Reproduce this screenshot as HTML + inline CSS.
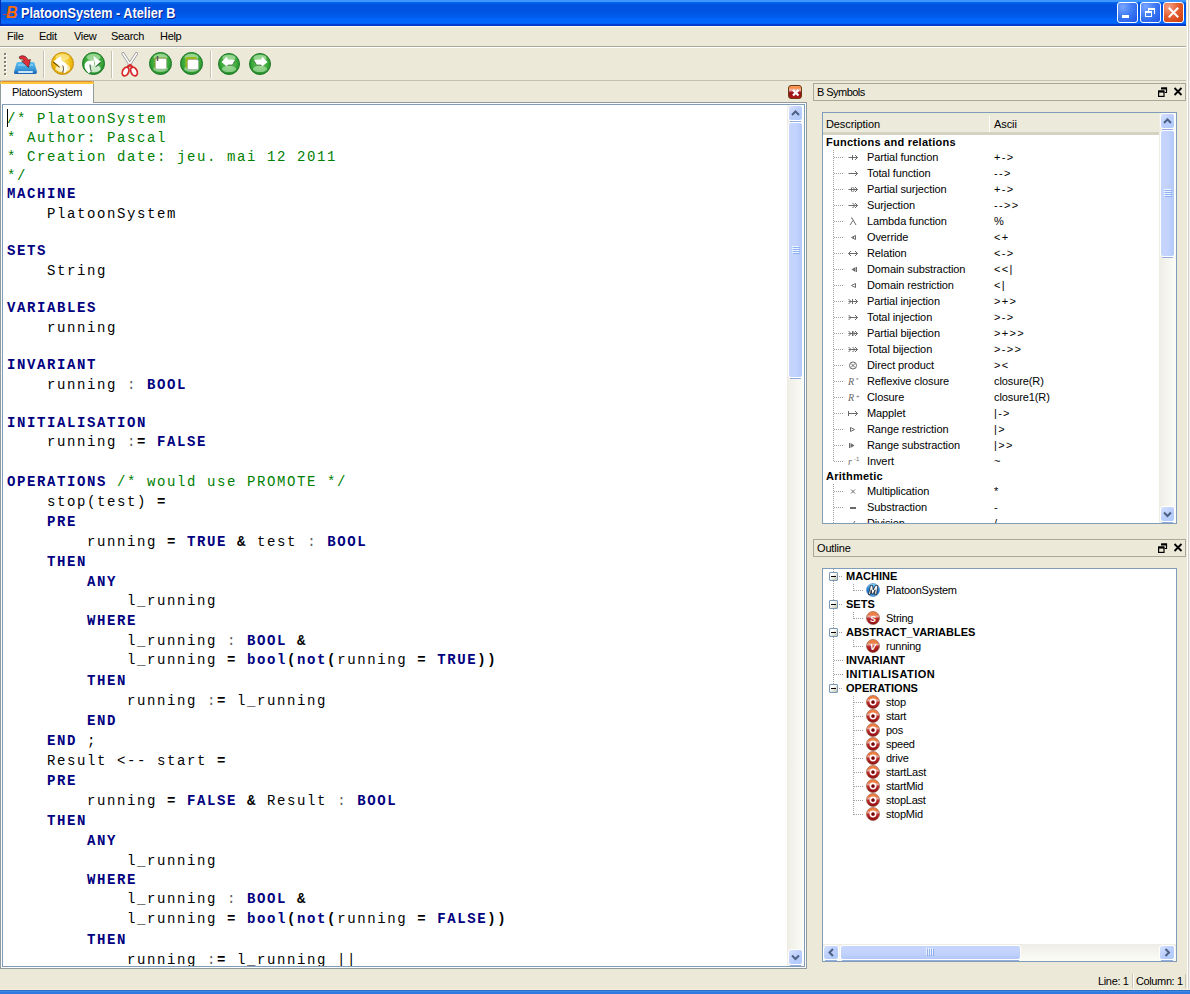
<!DOCTYPE html>
<html><head><meta charset="utf-8">
<style>
*{margin:0;padding:0;box-sizing:border-box}
html,body{width:1190px;height:994px;overflow:hidden;background:#ece9d8;font-family:"Liberation Sans",sans-serif;font-size:11px;color:#000;position:relative}
.a{position:absolute}
svg.a{display:block;overflow:visible}
#title{left:0;top:0;width:1186px;height:26px;background:linear-gradient(to bottom,#3d95ff 0,#3f96ff 2px,#0a6cf5 2px,#005fea 3px,#0057e2 4px,#0053e0 5px,#0053e0 11px,#0056e6 13px,#005cee 17px,#0066fa 19px,#0068fe 23px,#0058e8 24px,#0044d2 24px,#0032c5 26px)}
#title .t{left:21px;top:5px;color:#fff;font-weight:bold;font-size:14px;letter-spacing:0;text-shadow:1px 1px 0 #0a1f8f;white-space:pre;transform:scaleX(0.905);transform-origin:0 0}
.wb{top:2px;width:21px;height:21px;border:1px solid #fff;border-radius:3px;background:radial-gradient(circle at 25% 20%,#7aa6ff 0,#3f7cf5 45%,#1c55e6 100%)}
#menu{left:0;top:26px;width:1186px;height:21px;border-top:1px solid #fffbee;border-bottom:1px solid #aca899}
#menu span{position:absolute;top:3px;letter-spacing:-0.3px}
#tbar{left:0;top:47px;width:1186px;height:34px;border-top:1px solid #fff;border-bottom:1px solid #c5c2b2}
.sep{width:1px;background:#c5c2b2;border-right:1px solid #fff}
.code{font-family:"Liberation Mono",monospace;font-size:14px;letter-spacing:1.6px;white-space:pre;position:absolute;left:4px;line-height:20px;height:20px}
.k{color:#000080;font-weight:bold}
.c{color:#008000}
.o{color:#606060}
.sb{background:linear-gradient(to right,#eeede5,#fcfcf8)}
.sb2{background:linear-gradient(to bottom,#eeede5,#fcfcf8)}
.thumb{border:1px solid #fff;border-radius:3px;background:linear-gradient(to right,#c6d5fc,#c3d3fd 50%,#b2c9f9)}
.thumb2{border:1px solid #fff;border-radius:3px;background:linear-gradient(to bottom,#c6d5fc,#c3d3fd 50%,#b2c9f9)}
.btn{border:1px solid #fff;border-radius:3px;background:linear-gradient(135deg,#d6e2fe,#bccefd 50%,#aecafa)}
.dock{border:1px solid #aca899;background:#ece9d8}
.frame{border:1px solid #7f9db9;background:#fff}
.hdr{background:#ebeadb;border-bottom:3px solid #d6d2c2}
.ts{white-space:pre;letter-spacing:-0.1px}
.tb{white-space:pre;font-weight:bold}
.dh{height:1px;background:repeating-linear-gradient(to right,#a0a0a0 0,#a0a0a0 1px,transparent 1px,transparent 2px)}
.dv{width:1px;background:repeating-linear-gradient(to bottom,#a0a0a0 0,#a0a0a0 1px,transparent 1px,transparent 2px)}
.ebox{width:9px;height:9px;border:1px solid #7898b5;border-radius:1px;background:linear-gradient(135deg,#fff 30%,#c4c2b0)}
.ebox:after{content:"";position:absolute;left:1px;top:3px;width:5px;height:1px;background:#000}
</style></head><body>
<div id="title" class="a">
  <div class="a" style="left:0;top:0;width:1px;height:26px;background:#0030b0"></div>
  <div class="a" style="left:1px;top:4px;width:17px;height:16px;background:#0a5ad8;opacity:0.5"></div>
  <div class="a" style="left:6px;top:5px;font-size:16px;line-height:16px;font-weight:bold;font-style:italic;color:#ff6a08;font-family:'Liberation Sans',sans-serif;">B</div>
  <div class="a" style="left:3px;top:14px;width:9px;height:1px;background:#d04040;opacity:0.8"></div>
  <div class="a t">PlatoonSystem - Atelier B</div>
  <div class="a wb" style="left:1117px"><div class="a" style="left:4px;top:12px;width:7px;height:3px;background:#fff"></div></div>
  <div class="a wb" style="left:1140px"><div class="a" style="left:4px;top:8px;width:7px;height:6px;border:1px solid #fff;border-top-width:2px"></div><div class="a" style="left:7px;top:5px;width:7px;height:6px;border:1px solid #fff;border-top-width:2px;border-left:none;border-bottom:none"></div><div class="a" style="left:7px;top:5px;width:1px;height:3px;background:#fff"></div></div>
  <div class="a wb" style="left:1163px;background:radial-gradient(circle at 25% 20%,#f3a08a 0,#e6602f 45%,#c83a0a 100%)"><svg class="a" style="left:4px;top:4px" width="11" height="11"><path d="M0.8 0.8L10.2 10.2M10.2 0.8L0.8 10.2" stroke="#fff" stroke-width="2"/></svg></div>
</div>
<div class="a" style="left:1186px;top:0;width:4px;height:990px;background:linear-gradient(to right,#ece9d8 0,#ece9d8 1px,#fff 1px,#fff 2px,#d4d0c8 2px,#d4d0c8 3px,#f2f2f2 3px)"></div>
<div id="menu" class="a">
  <span style="left:7px">File</span><span style="left:39px">Edit</span><span style="left:74px">View</span><span style="left:111px">Search</span><span style="left:160px">Help</span>
</div>
<div id="tbar" class="a"></div>
<div class="a" style="left:4px;top:53px;width:2px;height:2px;background:#7a7868;border-radius:0.5px;box-shadow:1px 1px 0 #fff"></div>
<div class="a" style="left:4px;top:57px;width:2px;height:2px;background:#7a7868;border-radius:0.5px;box-shadow:1px 1px 0 #fff"></div>
<div class="a" style="left:4px;top:61px;width:2px;height:2px;background:#7a7868;border-radius:0.5px;box-shadow:1px 1px 0 #fff"></div>
<div class="a" style="left:4px;top:65px;width:2px;height:2px;background:#7a7868;border-radius:0.5px;box-shadow:1px 1px 0 #fff"></div>
<div class="a" style="left:4px;top:69px;width:2px;height:2px;background:#7a7868;border-radius:0.5px;box-shadow:1px 1px 0 #fff"></div>
<div class="a" style="left:4px;top:73px;width:2px;height:2px;background:#7a7868;border-radius:0.5px;box-shadow:1px 1px 0 #fff"></div>
<div class="a sep" style="left:43px;top:51px;height:27px;width:2px"></div>
<div class="a sep" style="left:111px;top:51px;height:27px;width:2px"></div>
<div class="a sep" style="left:210px;top:51px;height:27px;width:2px"></div>
<svg class="a" style="left:13px;top:53px" width="25" height="22" viewBox="0 0 25 22">
<defs><linearGradient id="tray" x1="0" y1="0" x2="0" y2="1"><stop offset="0" stop-color="#5cc0f0"/><stop offset="0.6" stop-color="#3a9ad8"/><stop offset="1" stop-color="#1a5fb0"/></linearGradient></defs>
<path d="M5 9H20Q21 9 21.5 10L24 19Q24 21 22 21H3Q0.5 21 1 19L3.5 10Q4 9 5 9Z" fill="url(#tray)"/>
<path d="M5 12H20" stroke="#a8dcf6" stroke-width="1.5" opacity="0.7"/>
<path d="M6 19H19" stroke="#c8e8fa" stroke-width="2" stroke-linecap="round"/>
<path d="M6 4Q9 1.5 12.5 3.5Q14.5 5 15 7L17.5 6.5L15.5 14.5L8.5 8L11.5 7.5Q10 5.5 7 6Z" fill="#e2303a" stroke="#2a1010" stroke-width="0.5"/>
</svg>
<svg class="a" style="left:51px;top:52px" width="23" height="23" viewBox="0 0 23 23"><defs><radialGradient id="tb51" cx="0.5" cy="0.45" r="0.55"><stop offset="0" stop-color="#f8e27a"/><stop offset="0.7" stop-color="#f0bd10"/><stop offset="1" stop-color="#d99a05"/></radialGradient></defs><circle cx="11.5" cy="11.5" r="11" fill="url(#tb51)" stroke="#c8961a" stroke-width="1"/><ellipse cx="11.5" cy="5.175" rx="6.9" ry="3.45" fill="#fff3b0" opacity="0.55"/><ellipse cx="11.5" cy="16.675" rx="7.475" ry="3.22" fill="#fff3b0" opacity="0.5"/><ellipse cx="12" cy="16" rx="7" ry="4.5" fill="#fff" opacity="0.55"/><path d="M5 8.5L13 13Q15 15 12 20" stroke="#fff" stroke-width="5" fill="none"/><path d="M2.3 9.5L10 4.3L11 13Z" fill="#fff"/><path d="M2.3 10L8.6 15.3M11.5 13.5Q13.5 16 11.5 20.5" stroke="#3a2a00" stroke-width="1.1" fill="none" opacity="0.75"/></svg>
<svg class="a" style="left:82px;top:52px" width="23" height="23" viewBox="0 0 23 23"><defs><radialGradient id="tb82" cx="0.5" cy="0.45" r="0.55"><stop offset="0" stop-color="#7cc46a"/><stop offset="0.7" stop-color="#3aa83a"/><stop offset="1" stop-color="#22882a"/></radialGradient></defs><circle cx="11.5" cy="11.5" r="11" fill="url(#tb82)" stroke="#1f7a28" stroke-width="1"/><ellipse cx="11.5" cy="5.175" rx="6.9" ry="3.45" fill="#d8f5d0" opacity="0.55"/><ellipse cx="11.5" cy="16.675" rx="7.475" ry="3.22" fill="#d8f5d0" opacity="0.5"/><ellipse cx="12" cy="16.5" rx="6.5" ry="4" fill="#fff" opacity="0.55"/><path d="M12 11H9Q4.5 11 5 14.5Q5.5 17 8.5 19.5" stroke="#fff" stroke-width="5" fill="none"/><path d="M11.4 4L19 9.8L13.6 14.8Z" fill="#fff"/><path d="M18.6 10.3L13.6 14.8M8 12.5Q8 16 9.3 19.5" stroke="#0a3a0a" stroke-width="1.1" fill="none" opacity="0.75"/></svg>
<svg class="a" style="left:121px;top:52px" width="18" height="25" viewBox="0 0 18 25">
<path d="M2 1.5L10 14M15.5 1.5L7.5 14" stroke="#888" stroke-width="3" stroke-linecap="round"/>
<path d="M2 1.5L10 14M15.5 1.5L7.5 14" stroke="#fff" stroke-width="1.6" stroke-linecap="round"/>
<ellipse cx="4.6" cy="19.5" rx="3" ry="4.6" transform="rotate(25 4.6 19.5)" fill="#fff" stroke="#d82828" stroke-width="1.8"/>
<ellipse cx="13" cy="19.5" rx="3" ry="4.6" transform="rotate(-25 13 19.5)" fill="#fff" stroke="#d82828" stroke-width="1.8"/>
<path d="M6.5 15L9 13L11.5 15" stroke="#d82828" stroke-width="2.2" fill="none"/>
</svg>
<svg class="a" style="left:149px;top:52px" width="23" height="23" viewBox="0 0 23 23"><defs><radialGradient id="tb149" cx="0.5" cy="0.45" r="0.55"><stop offset="0" stop-color="#7cc46a"/><stop offset="0.7" stop-color="#3aa83a"/><stop offset="1" stop-color="#22882a"/></radialGradient></defs><circle cx="11.5" cy="11.5" r="11" fill="url(#tb149)" stroke="#1f7a28" stroke-width="1"/><ellipse cx="11.5" cy="5.175" rx="6.9" ry="3.45" fill="#d8f5d0" opacity="0.55"/><ellipse cx="11.5" cy="16.675" rx="7.475" ry="3.22" fill="#d8f5d0" opacity="0.5"/><rect x="5.5" y="5.5" width="12" height="11" rx="1.5" fill="#8a9c12"/><rect x="6.5" y="6.5" width="11" height="10.5" rx="1.5" fill="#fff" stroke="#a0a0a0" stroke-width="0.5"/><path d="M8.5 4V9" stroke="#555" stroke-width="1.5"/></svg>
<svg class="a" style="left:180px;top:52px" width="23" height="23" viewBox="0 0 23 23"><defs><radialGradient id="tb180" cx="0.5" cy="0.45" r="0.55"><stop offset="0" stop-color="#7cc46a"/><stop offset="0.7" stop-color="#3aa83a"/><stop offset="1" stop-color="#22882a"/></radialGradient></defs><circle cx="11.5" cy="11.5" r="11" fill="url(#tb180)" stroke="#1f7a28" stroke-width="1"/><ellipse cx="11.5" cy="5.175" rx="6.9" ry="3.45" fill="#d8f5d0" opacity="0.55"/><ellipse cx="11.5" cy="16.675" rx="7.475" ry="3.22" fill="#d8f5d0" opacity="0.5"/><rect x="5.5" y="5" width="11.5" height="11" rx="1.5" fill="#9ab818"/><rect x="7.5" y="7.5" width="11" height="10" rx="1.5" fill="#fff" stroke="#909090" stroke-width="0.5"/></svg>
<svg class="a" style="left:218px;top:53px" width="22" height="22" viewBox="0 0 22 22"><defs><radialGradient id="tb218" cx="0.5" cy="0.45" r="0.55"><stop offset="0" stop-color="#7cc46a"/><stop offset="0.7" stop-color="#3aa83a"/><stop offset="1" stop-color="#22882a"/></radialGradient></defs><circle cx="11" cy="11" r="10.5" fill="url(#tb218)" stroke="#1f7a28" stroke-width="1"/><ellipse cx="11" cy="4.95" rx="6.6" ry="3.3" fill="#d8f5d0" opacity="0.55"/><ellipse cx="11" cy="15.95" rx="7.15" ry="3.08" fill="#d8f5d0" opacity="0.5"/><path d="M3.5 9L9 3.5L9.5 6.5L17 7L14.5 12L10 12L9.5 14Z" fill="#fff"/><path d="M9 13.5L10 12L14.5 12L17 7.5" stroke="#1a4a1a" stroke-width="0.8" fill="none" opacity="0.7"/></svg>
<svg class="a" style="left:249px;top:53px" width="22" height="22" viewBox="0 0 22 22"><defs><radialGradient id="tb249" cx="0.5" cy="0.45" r="0.55"><stop offset="0" stop-color="#7cc46a"/><stop offset="0.7" stop-color="#3aa83a"/><stop offset="1" stop-color="#22882a"/></radialGradient></defs><circle cx="11" cy="11" r="10.5" fill="url(#tb249)" stroke="#1f7a28" stroke-width="1"/><ellipse cx="11" cy="4.95" rx="6.6" ry="3.3" fill="#d8f5d0" opacity="0.55"/><ellipse cx="11" cy="15.95" rx="7.15" ry="3.08" fill="#d8f5d0" opacity="0.5"/><path d="M18.5 9L13 3.5L12.5 6.5L5 7L7.5 12L12 12L12.5 14Z" fill="#fff"/><path d="M13 13.5L12 12L7.5 12L5 7.5" stroke="#1a4a1a" stroke-width="0.8" fill="none" opacity="0.7"/></svg>

<!-- editor tab pane -->
<div class="a" style="left:0px;top:102px;width:807px;height:867px;border:1px solid #919b9c;background:#fcfcfe"></div>
<div class="a" style="left:0px;top:81px;width:94px;height:22px;background:#fcfcfe;border:1px solid #919b9c;border-bottom:none;border-top:none"></div>
<div class="a" style="left:0px;top:81px;width:94px;height:3px;background:linear-gradient(#e68b2c 0,#e68b2c 1px,#ffc83c 1px);border-radius:3px 3px 0 0"></div>
<div class="a" style="left:12px;top:86px;letter-spacing:-0.3px">PlatoonSystem</div>
<div class="a" style="left:788px;top:85px;width:14px;height:14px;border-radius:3px;background:linear-gradient(#f7a070 0,#f88a40 15%,#f0c0c0 35%,#b02030 50%,#901018 65%,#b01818 100%);border:1px solid #6a3a10"><svg class="a" style="left:2px;top:2px" width="9" height="9"><path d="M2 2L7.5 7.5M7.5 2L2 7.5" stroke="#fff" stroke-width="2.3"/></svg></div>
<div class="a frame" style="left:2px;top:104px;width:803px;height:863px"></div>
<div id="code" class="a" style="left:3px;top:105px;width:784px;height:861px;overflow:hidden;background:#fff"><div class="code" style="top:4px"><span class="c">/* PlatoonSystem</span></div>
<div class="code" style="top:23px"><span class="c">* Author: Pascal</span></div>
<div class="code" style="top:42px"><span class="c">* Creation date: jeu. mai 12 2011</span></div>
<div class="code" style="top:61px"><span class="c">*/</span></div>
<div class="code" style="top:79px"><span class="k">MACHINE</span></div>
<div class="code" style="top:99px">    PlatoonSystem</div>
<div class="code" style="top:136px"><span class="k">SETS</span></div>
<div class="code" style="top:156px">    String</div>
<div class="code" style="top:193px"><span class="k">VARIABLES</span></div>
<div class="code" style="top:213px">    running</div>
<div class="code" style="top:250px"><span class="k">INVARIANT</span></div>
<div class="code" style="top:270px">    running <span class="o">:</span> <span class="k">BOOL</span></div>
<div class="code" style="top:308px"><span class="k">INITIALISATION</span></div>
<div class="code" style="top:327px">    running <span class="o">:</span><b>=</b> <span class="k">FALSE</span></div>
<div class="code" style="top:367px"><span class="k">OPERATIONS</span> <span class="c">/* would use PROMOTE */</span></div>
<div class="code" style="top:387px">    stop(test) <b>=</b></div>
<div class="code" style="top:407px">    <span class="k">PRE</span></div>
<div class="code" style="top:427px">        running <b>=</b> <span class="k">TRUE</span> <b>&amp;</b> test <span class="o">:</span> <span class="k">BOOL</span></div>
<div class="code" style="top:447px">    <span class="k">THEN</span></div>
<div class="code" style="top:467px">        <span class="k">ANY</span></div>
<div class="code" style="top:486px">            l_running</div>
<div class="code" style="top:506px">        <span class="k">WHERE</span></div>
<div class="code" style="top:526px">            l_running <span class="o">:</span> <span class="k">BOOL</span> <b>&amp;</b></div>
<div class="code" style="top:545px">            l_running <b>=</b> <span class="k">bool</span><b>(</b><span class="k">not</span><b>(</b>running <b>=</b> <span class="k">TRUE</span><b>)</b><b>)</b></div>
<div class="code" style="top:566px">        <span class="k">THEN</span></div>
<div class="code" style="top:586px">            running <span class="o">:</span><b>=</b> l_running</div>
<div class="code" style="top:606px">        <span class="k">END</span></div>
<div class="code" style="top:626px">    <span class="k">END</span> ;</div>
<div class="code" style="top:646px">    Result &lt;-- start <b>=</b></div>
<div class="code" style="top:666px">    <span class="k">PRE</span></div>
<div class="code" style="top:686px">        running <b>=</b> <span class="k">FALSE</span> <b>&amp;</b> Result <span class="o">:</span> <span class="k">BOOL</span></div>
<div class="code" style="top:706px">    <span class="k">THEN</span></div>
<div class="code" style="top:726px">        <span class="k">ANY</span></div>
<div class="code" style="top:746px">            l_running</div>
<div class="code" style="top:765px">        <span class="k">WHERE</span></div>
<div class="code" style="top:784px">            l_running <span class="o">:</span> <span class="k">BOOL</span> <b>&amp;</b></div>
<div class="code" style="top:804px">            l_running <b>=</b> <span class="k">bool</span><b>(</b><span class="k">not</span><b>(</b>running <b>=</b> <span class="k">FALSE</span><b>)</b><b>)</b></div>
<div class="code" style="top:825px">        <span class="k">THEN</span></div>
<div class="code" style="top:845px">            running <span class="o">:</span><b>=</b> l_running ||</div>
<div class="a" style="left:4px;top:4px;width:1px;height:18px;background:#000"></div></div>
<div class="a sb" style="left:787px;top:105px;width:17px;height:861px"></div>
<div class="a btn" style="left:788px;top:105px;width:15px;height:16px"><svg class="a" style="left:2px;top:4px" width="9" height="7"><path d="M1 5L4.5 1.5L8 5" stroke="#4d6185" stroke-width="2" fill="none"/></svg></div><div class="a" style="left:790px;top:121px;width:11px;height:1px;background:#7b9ad8;opacity:0.8"></div>
<div class="a btn" style="left:788px;top:949px;width:15px;height:16px"><svg class="a" style="left:2px;top:4px" width="9" height="7"><path d="M1 1.5L4.5 5L8 1.5" stroke="#4d6185" stroke-width="2" fill="none"/></svg></div><div class="a" style="left:790px;top:965px;width:11px;height:1px;background:#7b9ad8;opacity:0.8"></div>
<div class="a thumb" style="left:788px;top:122px;width:15px;height:256px"></div><div class="a" style="left:790px;top:378px;width:11px;height:1px;background:#7b9ad8;opacity:0.8"></div>
<svg class="a" style="left:792px;top:246px" width="8" height="8"><path d="M0 0.5H7M0 2.5H7M0 4.5H7M0 6.5H7" stroke="#eef4fe" stroke-width="1"/><path d="M1 1.5H8M1 3.5H8M1 5.5H8M1 7.5H8" stroke="#8faff3" stroke-width="1"/></svg>

<!-- B Symbols dock -->
<div class="a dock" style="left:813px;top:83px;width:373px;height:18px"><span class="a" style="left:3px;top:2px;letter-spacing:-0.55px">B Symbols</span></div>
<svg class="a" style="left:1158px;top:87px" width="26" height="10" viewBox="0 0 26 10"><path d="M3.5 1H8.5V5.5H6.5" stroke="#000" stroke-width="1.2" fill="none"/><path d="M3 1.5H9" stroke="#000" stroke-width="2"/><rect x="0.6" y="4" width="5.4" height="5.4" stroke="#000" stroke-width="1.2" fill="none"/><path d="M0.5 4.6H6" stroke="#000" stroke-width="2"/><path d="M16.5 1L23.5 8M23.5 1L16.5 8" stroke="#000" stroke-width="1.8"/></svg>
<div class="a frame" style="left:822px;top:112px;width:355px;height:412px"></div>
<div class="a hdr" style="left:823px;top:113px;width:336px;height:22px"></div>
<div class="a" style="left:989px;top:116px;width:1px;height:16px;background:#c7c5b2;border-right:1px solid #fff"></div>
<div class="a ts" style="left:826px;top:118px">Description</div>
<div class="a ts" style="left:994px;top:118px">Ascii</div>
<div class="a" style="left:823px;top:135px;width:337px;height:388px;overflow:hidden">
<div class="a tb" style="left:3px;top:1px;letter-spacing:0.25px">Functions and relations</div>
<div class="a dh" style="left:11px;top:22px;width:9px"></div>
<svg class="a" style="left:25px;top:18px" width="11" height="9" viewBox="0 0 11 9"><path d="M0.5 4.5H9.5M7 2L9.5 4.5L7 7" stroke="#6a6a6a" stroke-width="1" fill="none"/><path d="M4.5 2V7" stroke="#6a6a6a" stroke-width="1" fill="none"/></svg>
<div class="a ts" style="left:44px;top:16px">Partial function</div>
<div class="a ts" style="left:171px;top:16px;letter-spacing:1.3px">+-&gt;</div>
<div class="a dh" style="left:11px;top:38px;width:9px"></div>
<svg class="a" style="left:25px;top:34px" width="11" height="9" viewBox="0 0 11 9"><path d="M0.5 4.5H9.5M7 2L9.5 4.5L7 7" stroke="#6a6a6a" stroke-width="1" fill="none"/></svg>
<div class="a ts" style="left:44px;top:32px">Total function</div>
<div class="a ts" style="left:171px;top:32px;letter-spacing:1.3px">--&gt;</div>
<div class="a dh" style="left:11px;top:54px;width:9px"></div>
<svg class="a" style="left:25px;top:50px" width="11" height="9" viewBox="0 0 11 9"><path d="M0.5 4.5H9.5" stroke="#6a6a6a" stroke-width="1" fill="none"/><path d="M4.5 2L7 4.5L4.5 7M7 2L9.5 4.5L7 7" stroke="#6a6a6a" stroke-width="1" fill="none"/><path d="M3.5 2.5V6.5" stroke="#6a6a6a" stroke-width="1" fill="none"/></svg>
<div class="a ts" style="left:44px;top:48px">Partial surjection</div>
<div class="a ts" style="left:171px;top:48px;letter-spacing:1.3px">+-&gt;</div>
<div class="a dh" style="left:11px;top:70px;width:9px"></div>
<svg class="a" style="left:25px;top:66px" width="11" height="9" viewBox="0 0 11 9"><path d="M0.5 4.5H9.5" stroke="#6a6a6a" stroke-width="1" fill="none"/><path d="M4.5 2L7 4.5L4.5 7M7 2L9.5 4.5L7 7" stroke="#6a6a6a" stroke-width="1" fill="none"/></svg>
<div class="a ts" style="left:44px;top:64px">Surjection</div>
<div class="a ts" style="left:171px;top:64px;letter-spacing:1.3px">--&gt;&gt;</div>
<div class="a dh" style="left:11px;top:86px;width:9px"></div>
<svg class="a" style="left:25px;top:82px" width="11" height="9" viewBox="0 0 11 9"><path d="M2 8L5 3.5M3 1H4L8 8" stroke="#6a6a6a" stroke-width="1" fill="none"/></svg>
<div class="a ts" style="left:44px;top:80px">Lambda function</div>
<div class="a ts" style="left:171px;top:80px;letter-spacing:1.3px">%</div>
<div class="a dh" style="left:11px;top:102px;width:9px"></div>
<svg class="a" style="left:25px;top:98px" width="11" height="9" viewBox="0 0 11 9"><path d="M7.5 2.5V6.5L3.5 4.5Z" stroke="#6a6a6a" stroke-width="1" fill="none"/><path d="M5.5 3.5V5.5" stroke="#6a6a6a" stroke-width="1" fill="none"/></svg>
<div class="a ts" style="left:44px;top:96px">Override</div>
<div class="a ts" style="left:171px;top:96px;letter-spacing:1.3px">&lt;+</div>
<div class="a dh" style="left:11px;top:118px;width:9px"></div>
<svg class="a" style="left:25px;top:114px" width="11" height="9" viewBox="0 0 11 9"><path d="M0.5 4.5H9.5M7 2L9.5 4.5L7 7M3 2L0.5 4.5L3 7" stroke="#6a6a6a" stroke-width="1" fill="none"/></svg>
<div class="a ts" style="left:44px;top:112px">Relation</div>
<div class="a ts" style="left:171px;top:112px;letter-spacing:1.3px">&lt;-&gt;</div>
<div class="a dh" style="left:11px;top:134px;width:9px"></div>
<svg class="a" style="left:25px;top:130px" width="11" height="9" viewBox="0 0 11 9"><path d="M7.5 2V7L3.5 4.5Z" fill="#6a6a6a"/><path d="M8.5 2V7" stroke="#6a6a6a" stroke-width="1" fill="none"/></svg>
<div class="a ts" style="left:44px;top:128px">Domain substraction</div>
<div class="a ts" style="left:171px;top:128px;letter-spacing:1.3px">&lt;&lt;|</div>
<div class="a dh" style="left:11px;top:150px;width:9px"></div>
<svg class="a" style="left:25px;top:146px" width="11" height="9" viewBox="0 0 11 9"><path d="M7.5 2.5V6.5L3.5 4.5Z" stroke="#6a6a6a" stroke-width="1" fill="none"/></svg>
<div class="a ts" style="left:44px;top:144px">Domain restriction</div>
<div class="a ts" style="left:171px;top:144px;letter-spacing:1.3px">&lt;|</div>
<div class="a dh" style="left:11px;top:166px;width:9px"></div>
<svg class="a" style="left:25px;top:162px" width="11" height="9" viewBox="0 0 11 9"><path d="M0.5 2L3 4.5L0.5 7" stroke="#6a6a6a" stroke-width="1" fill="none"/><path d="M0.5 4.5H9.5M7 2L9.5 4.5L7 7" stroke="#6a6a6a" stroke-width="1" fill="none"/><path d="M4.5 2V7" stroke="#6a6a6a" stroke-width="1" fill="none"/></svg>
<div class="a ts" style="left:44px;top:160px">Partial injection</div>
<div class="a ts" style="left:171px;top:160px;letter-spacing:1.3px">&gt;+&gt;</div>
<div class="a dh" style="left:11px;top:182px;width:9px"></div>
<svg class="a" style="left:25px;top:178px" width="11" height="9" viewBox="0 0 11 9"><path d="M0.5 2L3 4.5L0.5 7" stroke="#6a6a6a" stroke-width="1" fill="none"/><path d="M0.5 4.5H9.5M7 2L9.5 4.5L7 7" stroke="#6a6a6a" stroke-width="1" fill="none"/></svg>
<div class="a ts" style="left:44px;top:176px">Total injection</div>
<div class="a ts" style="left:171px;top:176px;letter-spacing:1.3px">&gt;-&gt;</div>
<div class="a dh" style="left:11px;top:198px;width:9px"></div>
<svg class="a" style="left:25px;top:194px" width="11" height="9" viewBox="0 0 11 9"><path d="M0.5 2L3 4.5L0.5 7" stroke="#6a6a6a" stroke-width="1" fill="none"/><path d="M0.5 4.5H9.5" stroke="#6a6a6a" stroke-width="1" fill="none"/><path d="M4.5 2L7 4.5L4.5 7M7 2L9.5 4.5L7 7" stroke="#6a6a6a" stroke-width="1" fill="none"/><path d="M4.5 2V7" stroke="#6a6a6a" stroke-width="1" fill="none"/></svg>
<div class="a ts" style="left:44px;top:192px">Partial bijection</div>
<div class="a ts" style="left:171px;top:192px;letter-spacing:1.3px">&gt;+&gt;&gt;</div>
<div class="a dh" style="left:11px;top:214px;width:9px"></div>
<svg class="a" style="left:25px;top:210px" width="11" height="9" viewBox="0 0 11 9"><path d="M0.5 2L3 4.5L0.5 7" stroke="#6a6a6a" stroke-width="1" fill="none"/><path d="M0.5 4.5H9.5" stroke="#6a6a6a" stroke-width="1" fill="none"/><path d="M4.5 2L7 4.5L4.5 7M7 2L9.5 4.5L7 7" stroke="#6a6a6a" stroke-width="1" fill="none"/></svg>
<div class="a ts" style="left:44px;top:208px">Total bijection</div>
<div class="a ts" style="left:171px;top:208px;letter-spacing:1.3px">&gt;-&gt;&gt;</div>
<div class="a dh" style="left:11px;top:230px;width:9px"></div>
<svg class="a" style="left:25px;top:226px" width="11" height="9" viewBox="0 0 11 9"><circle cx="5" cy="4.5" r="3.5" stroke="#6a6a6a" stroke-width="1" fill="none"/><path d="M3 2.5L7 6.5M7 2.5L3 6.5" stroke="#6a6a6a" stroke-width="1" fill="none"/></svg>
<div class="a ts" style="left:44px;top:224px">Direct product</div>
<div class="a ts" style="left:171px;top:224px;letter-spacing:1.3px">&gt;&lt;</div>
<div class="a dh" style="left:11px;top:246px;width:9px"></div>
<svg class="a" style="left:25px;top:242px" width="11" height="9" viewBox="0 0 11 9"><text x="0" y="8" font-family="Liberation Serif" font-style="italic" font-size="10" fill="#6a6a6a">R</text><text x="8" y="5" font-family="Liberation Sans" font-size="6" fill="#6a6a6a">*</text></svg>
<div class="a ts" style="left:44px;top:240px">Reflexive closure</div>
<div class="a ts" style="left:171px;top:240px">closure(R)</div>
<div class="a dh" style="left:11px;top:262px;width:9px"></div>
<svg class="a" style="left:25px;top:258px" width="11" height="9" viewBox="0 0 11 9"><text x="0" y="8" font-family="Liberation Serif" font-style="italic" font-size="10" fill="#6a6a6a">R</text><text x="8" y="5" font-family="Liberation Sans" font-size="6" fill="#6a6a6a">+</text></svg>
<div class="a ts" style="left:44px;top:256px">Closure</div>
<div class="a ts" style="left:171px;top:256px">closure1(R)</div>
<div class="a dh" style="left:11px;top:278px;width:9px"></div>
<svg class="a" style="left:25px;top:274px" width="11" height="9" viewBox="0 0 11 9"><path d="M0.5 4.5H9.5M7 2L9.5 4.5L7 7" stroke="#6a6a6a" stroke-width="1" fill="none"/><path d="M0.5 2V7" stroke="#6a6a6a" stroke-width="1" fill="none"/></svg>
<div class="a ts" style="left:44px;top:272px">Mapplet</div>
<div class="a ts" style="left:171px;top:272px;letter-spacing:1.3px">|-&gt;</div>
<div class="a dh" style="left:11px;top:294px;width:9px"></div>
<svg class="a" style="left:25px;top:290px" width="11" height="9" viewBox="0 0 11 9"><path d="M2.5 2.5V6.5L6.5 4.5Z" stroke="#6a6a6a" stroke-width="1" fill="none"/></svg>
<div class="a ts" style="left:44px;top:288px">Range restriction</div>
<div class="a ts" style="left:171px;top:288px;letter-spacing:1.3px">|&gt;</div>
<div class="a dh" style="left:11px;top:310px;width:9px"></div>
<svg class="a" style="left:25px;top:306px" width="11" height="9" viewBox="0 0 11 9"><path d="M2.5 2V7L6.5 4.5Z" fill="#6a6a6a"/><path d="M1.5 2V7" stroke="#6a6a6a" stroke-width="1" fill="none"/></svg>
<div class="a ts" style="left:44px;top:304px">Range substraction</div>
<div class="a ts" style="left:171px;top:304px;letter-spacing:1.3px">|&gt;&gt;</div>
<div class="a dh" style="left:11px;top:326px;width:9px"></div>
<svg class="a" style="left:25px;top:322px" width="11" height="9" viewBox="0 0 11 9"><text x="0" y="8" font-family="Liberation Serif" font-style="italic" font-size="10" fill="#6a6a6a">r</text><text x="6" y="4" font-family="Liberation Sans" font-size="6" fill="#6a6a6a">-1</text></svg>
<div class="a ts" style="left:44px;top:320px">Invert</div>
<div class="a ts" style="left:171px;top:320px;letter-spacing:1.3px">~</div>
<div class="a tb" style="left:3px;top:335px;letter-spacing:0.25px">Arithmetic</div>
<div class="a dh" style="left:11px;top:356px;width:9px"></div>
<svg class="a" style="left:25px;top:352px" width="11" height="9" viewBox="0 0 11 9"><path d="M3 2.5L7 6.5M7 2.5L3 6.5" stroke="#6a6a6a" stroke-width="1" fill="none"/></svg>
<div class="a ts" style="left:44px;top:350px">Multiplication</div>
<div class="a ts" style="left:171px;top:350px;letter-spacing:1.3px">*</div>
<div class="a dh" style="left:11px;top:372px;width:9px"></div>
<svg class="a" style="left:25px;top:368px" width="11" height="9" viewBox="0 0 11 9"><path d="M2 5H8" stroke="#6a6a6a" stroke-width="2"/></svg>
<div class="a ts" style="left:44px;top:366px">Substraction</div>
<div class="a ts" style="left:171px;top:366px;letter-spacing:1.3px">-</div>
<div class="a dh" style="left:11px;top:388px;width:9px"></div>
<svg class="a" style="left:25px;top:384px" width="11" height="9" viewBox="0 0 11 9"><path d="M3 8L7 2" stroke="#6a6a6a" stroke-width="1" fill="none"/></svg>
<div class="a ts" style="left:44px;top:382px">Division</div>
<div class="a ts" style="left:171px;top:382px;letter-spacing:1.3px">/</div>
<div class="a dv" style="left:10px;top:15px;height:312px"></div>
<div class="a dv" style="left:10px;top:349px;height:60px"></div>
</div>
<div class="a sb" style="left:1159px;top:113px;width:17px;height:410px"></div>
<div class="a btn" style="left:1160px;top:113px;width:15px;height:16px"><svg class="a" style="left:2px;top:4px" width="9" height="7"><path d="M1 5L4.5 1.5L8 5" stroke="#4d6185" stroke-width="2" fill="none"/></svg></div><div class="a" style="left:1162px;top:129px;width:11px;height:1px;background:#7b9ad8;opacity:0.8"></div>
<div class="a btn" style="left:1160px;top:506px;width:15px;height:16px"><svg class="a" style="left:2px;top:4px" width="9" height="7"><path d="M1 1.5L4.5 5L8 1.5" stroke="#4d6185" stroke-width="2" fill="none"/></svg></div><div class="a" style="left:1162px;top:522px;width:11px;height:1px;background:#7b9ad8;opacity:0.8"></div>
<div class="a thumb" style="left:1160px;top:130px;width:15px;height:127px"></div><div class="a" style="left:1162px;top:257px;width:11px;height:1px;background:#7b9ad8;opacity:0.8"></div>
<svg class="a" style="left:1164px;top:189px" width="8" height="8"><path d="M0 0.5H7M0 2.5H7M0 4.5H7M0 6.5H7" stroke="#eef4fe" stroke-width="1"/><path d="M1 1.5H8M1 3.5H8M1 5.5H8M1 7.5H8" stroke="#8faff3" stroke-width="1"/></svg>

<!-- Outline dock -->
<div class="a dock" style="left:813px;top:539px;width:373px;height:18px"><span class="a" style="left:3px;top:2px;letter-spacing:-0.15px">Outline</span></div>
<svg class="a" style="left:1158px;top:543px" width="26" height="10" viewBox="0 0 26 10"><path d="M3.5 1H8.5V5.5H6.5" stroke="#000" stroke-width="1.2" fill="none"/><path d="M3 1.5H9" stroke="#000" stroke-width="2"/><rect x="0.6" y="4" width="5.4" height="5.4" stroke="#000" stroke-width="1.2" fill="none"/><path d="M0.5 4.6H6" stroke="#000" stroke-width="2"/><path d="M16.5 1L23.5 8M23.5 1L16.5 8" stroke="#000" stroke-width="1.8"/></svg>
<div class="a frame" style="left:822px;top:568px;width:355px;height:394px"></div>
<div class="a dv" style="left:833px;top:569px;height:119px"></div>
<div class="a ebox" style="left:829px;top:572px"></div>
<div class="a dh" style="left:839px;top:576px;width:4px"></div>
<div class="a tb" style="left:846px;top:570px">MACHINE</div>
<div class="a dh" style="left:854px;top:590px;width:9px"></div>
<svg class="a" style="left:866px;top:583px" width="14" height="14" viewBox="0 0 14 14"><defs><linearGradient id="gblue866583" x1="0" y1="0" x2="0" y2="1"><stop offset="0" stop-color="#8fdcff"/><stop offset="0.35" stop-color="#2a90e0"/><stop offset="0.75" stop-color="#1668c0"/><stop offset="1" stop-color="#5ab4f0"/></linearGradient></defs><circle cx="7" cy="7" r="6.5" fill="url(#gblue866583)" stroke="#3a78b8" stroke-width="0.6"/><path d="M2.5 11.5L4.5 2.5H6.5L7.2 7L9.5 2.5H11.8L10.5 11.5H8.6L9.2 6.8L7 11H5.8L5.2 6.8L4.3 11.5Z" fill="#fff" stroke="#111" stroke-width="0.7"/></svg>
<div class="a ts" style="left:886px;top:584px;letter-spacing:-0.25px">PlatoonSystem</div>
<div class="a ebox" style="left:829px;top:600px"></div>
<div class="a dh" style="left:839px;top:604px;width:4px"></div>
<div class="a tb" style="left:846px;top:598px">SETS</div>
<div class="a dh" style="left:854px;top:618px;width:9px"></div>
<svg class="a" style="left:866px;top:611px" width="14" height="14" viewBox="0 0 14 14"><defs><linearGradient id="gred866611" x1="0" y1="0" x2="0" y2="1"><stop offset="0" stop-color="#f08a48"/><stop offset="0.22" stop-color="#f07a40"/><stop offset="0.38" stop-color="#e8a89a"/><stop offset="0.55" stop-color="#b82828"/><stop offset="1" stop-color="#8c0c10"/></linearGradient></defs><circle cx="7" cy="7" r="6.5" fill="url(#gred866611)" stroke="#8a4a30" stroke-width="0.6"/><text x="7" y="10.5" text-anchor="middle" font-family="Liberation Sans" font-weight="bold" font-style="italic" font-size="9" fill="#fff">S</text></svg>
<div class="a ts" style="left:886px;top:612px;letter-spacing:-0.25px">String</div>
<div class="a ebox" style="left:829px;top:628px"></div>
<div class="a dh" style="left:839px;top:632px;width:4px"></div>
<div class="a tb" style="left:846px;top:626px">ABSTRACT_VARIABLES</div>
<div class="a dh" style="left:854px;top:646px;width:9px"></div>
<svg class="a" style="left:866px;top:639px" width="14" height="14" viewBox="0 0 14 14"><defs><linearGradient id="gred866639" x1="0" y1="0" x2="0" y2="1"><stop offset="0" stop-color="#f08a48"/><stop offset="0.22" stop-color="#f07a40"/><stop offset="0.38" stop-color="#e8a89a"/><stop offset="0.55" stop-color="#b82828"/><stop offset="1" stop-color="#8c0c10"/></linearGradient></defs><circle cx="7" cy="7" r="6.5" fill="url(#gred866639)" stroke="#8a4a30" stroke-width="0.6"/><text x="7" y="10.5" text-anchor="middle" font-family="Liberation Sans" font-weight="bold" font-style="italic" font-size="9" fill="#fff">V</text></svg>
<div class="a ts" style="left:886px;top:640px;letter-spacing:-0.25px">running</div>
<div class="a dh" style="left:834px;top:660px;width:9px"></div>
<div class="a tb" style="left:846px;top:654px">INVARIANT</div>
<div class="a dh" style="left:834px;top:674px;width:9px"></div>
<div class="a tb" style="left:846px;top:668px;letter-spacing:0.5px">INITIALISATION</div>
<div class="a ebox" style="left:829px;top:684px"></div>
<div class="a dh" style="left:839px;top:688px;width:4px"></div>
<div class="a tb" style="left:846px;top:682px">OPERATIONS</div>
<div class="a dh" style="left:854px;top:702px;width:9px"></div>
<svg class="a" style="left:866px;top:695px" width="14" height="14" viewBox="0 0 14 14"><defs><linearGradient id="gred866695" x1="0" y1="0" x2="0" y2="1"><stop offset="0" stop-color="#f08a48"/><stop offset="0.22" stop-color="#f07a40"/><stop offset="0.38" stop-color="#e8a89a"/><stop offset="0.55" stop-color="#b82828"/><stop offset="1" stop-color="#8c0c10"/></linearGradient></defs><circle cx="7" cy="7" r="6.5" fill="url(#gred866695)" stroke="#8a4a30" stroke-width="0.6"/><circle cx="7" cy="7" r="2.7" fill="none" stroke="#fff" stroke-width="1.5"/><circle cx="7" cy="7" r="1.4" fill="#6a0808"/></svg>
<div class="a ts" style="left:886px;top:696px;letter-spacing:-0.25px">stop</div>
<div class="a dh" style="left:854px;top:716px;width:9px"></div>
<svg class="a" style="left:866px;top:709px" width="14" height="14" viewBox="0 0 14 14"><defs><linearGradient id="gred866709" x1="0" y1="0" x2="0" y2="1"><stop offset="0" stop-color="#f08a48"/><stop offset="0.22" stop-color="#f07a40"/><stop offset="0.38" stop-color="#e8a89a"/><stop offset="0.55" stop-color="#b82828"/><stop offset="1" stop-color="#8c0c10"/></linearGradient></defs><circle cx="7" cy="7" r="6.5" fill="url(#gred866709)" stroke="#8a4a30" stroke-width="0.6"/><circle cx="7" cy="7" r="2.7" fill="none" stroke="#fff" stroke-width="1.5"/><circle cx="7" cy="7" r="1.4" fill="#6a0808"/></svg>
<div class="a ts" style="left:886px;top:710px;letter-spacing:-0.25px">start</div>
<div class="a dh" style="left:854px;top:730px;width:9px"></div>
<svg class="a" style="left:866px;top:723px" width="14" height="14" viewBox="0 0 14 14"><defs><linearGradient id="gred866723" x1="0" y1="0" x2="0" y2="1"><stop offset="0" stop-color="#f08a48"/><stop offset="0.22" stop-color="#f07a40"/><stop offset="0.38" stop-color="#e8a89a"/><stop offset="0.55" stop-color="#b82828"/><stop offset="1" stop-color="#8c0c10"/></linearGradient></defs><circle cx="7" cy="7" r="6.5" fill="url(#gred866723)" stroke="#8a4a30" stroke-width="0.6"/><circle cx="7" cy="7" r="2.7" fill="none" stroke="#fff" stroke-width="1.5"/><circle cx="7" cy="7" r="1.4" fill="#6a0808"/></svg>
<div class="a ts" style="left:886px;top:724px;letter-spacing:-0.25px">pos</div>
<div class="a dh" style="left:854px;top:744px;width:9px"></div>
<svg class="a" style="left:866px;top:737px" width="14" height="14" viewBox="0 0 14 14"><defs><linearGradient id="gred866737" x1="0" y1="0" x2="0" y2="1"><stop offset="0" stop-color="#f08a48"/><stop offset="0.22" stop-color="#f07a40"/><stop offset="0.38" stop-color="#e8a89a"/><stop offset="0.55" stop-color="#b82828"/><stop offset="1" stop-color="#8c0c10"/></linearGradient></defs><circle cx="7" cy="7" r="6.5" fill="url(#gred866737)" stroke="#8a4a30" stroke-width="0.6"/><circle cx="7" cy="7" r="2.7" fill="none" stroke="#fff" stroke-width="1.5"/><circle cx="7" cy="7" r="1.4" fill="#6a0808"/></svg>
<div class="a ts" style="left:886px;top:738px;letter-spacing:-0.25px">speed</div>
<div class="a dh" style="left:854px;top:758px;width:9px"></div>
<svg class="a" style="left:866px;top:751px" width="14" height="14" viewBox="0 0 14 14"><defs><linearGradient id="gred866751" x1="0" y1="0" x2="0" y2="1"><stop offset="0" stop-color="#f08a48"/><stop offset="0.22" stop-color="#f07a40"/><stop offset="0.38" stop-color="#e8a89a"/><stop offset="0.55" stop-color="#b82828"/><stop offset="1" stop-color="#8c0c10"/></linearGradient></defs><circle cx="7" cy="7" r="6.5" fill="url(#gred866751)" stroke="#8a4a30" stroke-width="0.6"/><circle cx="7" cy="7" r="2.7" fill="none" stroke="#fff" stroke-width="1.5"/><circle cx="7" cy="7" r="1.4" fill="#6a0808"/></svg>
<div class="a ts" style="left:886px;top:752px;letter-spacing:-0.25px">drive</div>
<div class="a dh" style="left:854px;top:772px;width:9px"></div>
<svg class="a" style="left:866px;top:765px" width="14" height="14" viewBox="0 0 14 14"><defs><linearGradient id="gred866765" x1="0" y1="0" x2="0" y2="1"><stop offset="0" stop-color="#f08a48"/><stop offset="0.22" stop-color="#f07a40"/><stop offset="0.38" stop-color="#e8a89a"/><stop offset="0.55" stop-color="#b82828"/><stop offset="1" stop-color="#8c0c10"/></linearGradient></defs><circle cx="7" cy="7" r="6.5" fill="url(#gred866765)" stroke="#8a4a30" stroke-width="0.6"/><circle cx="7" cy="7" r="2.7" fill="none" stroke="#fff" stroke-width="1.5"/><circle cx="7" cy="7" r="1.4" fill="#6a0808"/></svg>
<div class="a ts" style="left:886px;top:766px;letter-spacing:-0.25px">startLast</div>
<div class="a dh" style="left:854px;top:786px;width:9px"></div>
<svg class="a" style="left:866px;top:779px" width="14" height="14" viewBox="0 0 14 14"><defs><linearGradient id="gred866779" x1="0" y1="0" x2="0" y2="1"><stop offset="0" stop-color="#f08a48"/><stop offset="0.22" stop-color="#f07a40"/><stop offset="0.38" stop-color="#e8a89a"/><stop offset="0.55" stop-color="#b82828"/><stop offset="1" stop-color="#8c0c10"/></linearGradient></defs><circle cx="7" cy="7" r="6.5" fill="url(#gred866779)" stroke="#8a4a30" stroke-width="0.6"/><circle cx="7" cy="7" r="2.7" fill="none" stroke="#fff" stroke-width="1.5"/><circle cx="7" cy="7" r="1.4" fill="#6a0808"/></svg>
<div class="a ts" style="left:886px;top:780px;letter-spacing:-0.25px">startMid</div>
<div class="a dh" style="left:854px;top:800px;width:9px"></div>
<svg class="a" style="left:866px;top:793px" width="14" height="14" viewBox="0 0 14 14"><defs><linearGradient id="gred866793" x1="0" y1="0" x2="0" y2="1"><stop offset="0" stop-color="#f08a48"/><stop offset="0.22" stop-color="#f07a40"/><stop offset="0.38" stop-color="#e8a89a"/><stop offset="0.55" stop-color="#b82828"/><stop offset="1" stop-color="#8c0c10"/></linearGradient></defs><circle cx="7" cy="7" r="6.5" fill="url(#gred866793)" stroke="#8a4a30" stroke-width="0.6"/><circle cx="7" cy="7" r="2.7" fill="none" stroke="#fff" stroke-width="1.5"/><circle cx="7" cy="7" r="1.4" fill="#6a0808"/></svg>
<div class="a ts" style="left:886px;top:794px;letter-spacing:-0.25px">stopLast</div>
<div class="a dh" style="left:854px;top:814px;width:9px"></div>
<svg class="a" style="left:866px;top:807px" width="14" height="14" viewBox="0 0 14 14"><defs><linearGradient id="gred866807" x1="0" y1="0" x2="0" y2="1"><stop offset="0" stop-color="#f08a48"/><stop offset="0.22" stop-color="#f07a40"/><stop offset="0.38" stop-color="#e8a89a"/><stop offset="0.55" stop-color="#b82828"/><stop offset="1" stop-color="#8c0c10"/></linearGradient></defs><circle cx="7" cy="7" r="6.5" fill="url(#gred866807)" stroke="#8a4a30" stroke-width="0.6"/><circle cx="7" cy="7" r="2.7" fill="none" stroke="#fff" stroke-width="1.5"/><circle cx="7" cy="7" r="1.4" fill="#6a0808"/></svg>
<div class="a ts" style="left:886px;top:808px;letter-spacing:-0.25px">stopMid</div>
<div class="a dv" style="left:853px;top:584px;height:7px"></div>
<div class="a dv" style="left:853px;top:612px;height:7px"></div>
<div class="a dv" style="left:853px;top:640px;height:7px"></div>
<div class="a dv" style="left:853px;top:696px;height:119px"></div>
<div class="a sb2" style="left:823px;top:944px;width:353px;height:17px"></div>
<div class="a btn" style="left:823px;top:945px;width:16px;height:15px"><svg class="a" style="left:4px;top:2px" width="7" height="9"><path d="M5 1L1.5 4.5L5 8" stroke="#4d6185" stroke-width="2" fill="none"/></svg></div><div class="a" style="left:825px;top:960px;width:12px;height:1px;background:#7b9ad8;opacity:0.8"></div>
<div class="a btn" style="left:1159px;top:945px;width:16px;height:15px"><svg class="a" style="left:4px;top:2px" width="7" height="9"><path d="M1.5 1L5 4.5L1.5 8" stroke="#4d6185" stroke-width="2" fill="none"/></svg></div><div class="a" style="left:1161px;top:960px;width:12px;height:1px;background:#7b9ad8;opacity:0.8"></div>
<div class="a thumb2" style="left:840px;top:945px;width:181px;height:15px"></div><div class="a" style="left:842px;top:960px;width:177px;height:1px;background:#7b9ad8;opacity:0.8"></div>
<svg class="a" style="left:926px;top:948px" width="9" height="8"><path d="M0.5 0V7M2.5 0V7M4.5 0V7M6.5 0V7" stroke="#eef4fe"/><path d="M1.5 1V8M3.5 1V8M5.5 1V8M7.5 1V8" stroke="#8faff3"/></svg>

<!-- status -->
<div class="a" style="left:1098px;top:975px;letter-spacing:-0.35px">Line: 1</div>
<div class="a" style="left:1136px;top:975px;letter-spacing:-0.38px">Column: 1</div>
<div class="a" style="left:0;top:989px;width:1190px;height:5px;background:linear-gradient(to bottom,#f8f2dc 0,#f8f2dc 1px,#2d6ac6 1px,#2d6ac6 2px,#3a8ae6 2px,#3a8ae6 3px,#3079e0 3px)"></div>
<div class="a" style="left:1132px;top:974px;width:2px;height:14px;background:linear-gradient(to right,#cbc8b8 1px,#fff 1px)"></div>
<div class="a" style="left:1185px;top:974px;width:1px;height:14px;background:#cbc8b8"></div>
</body></html>
